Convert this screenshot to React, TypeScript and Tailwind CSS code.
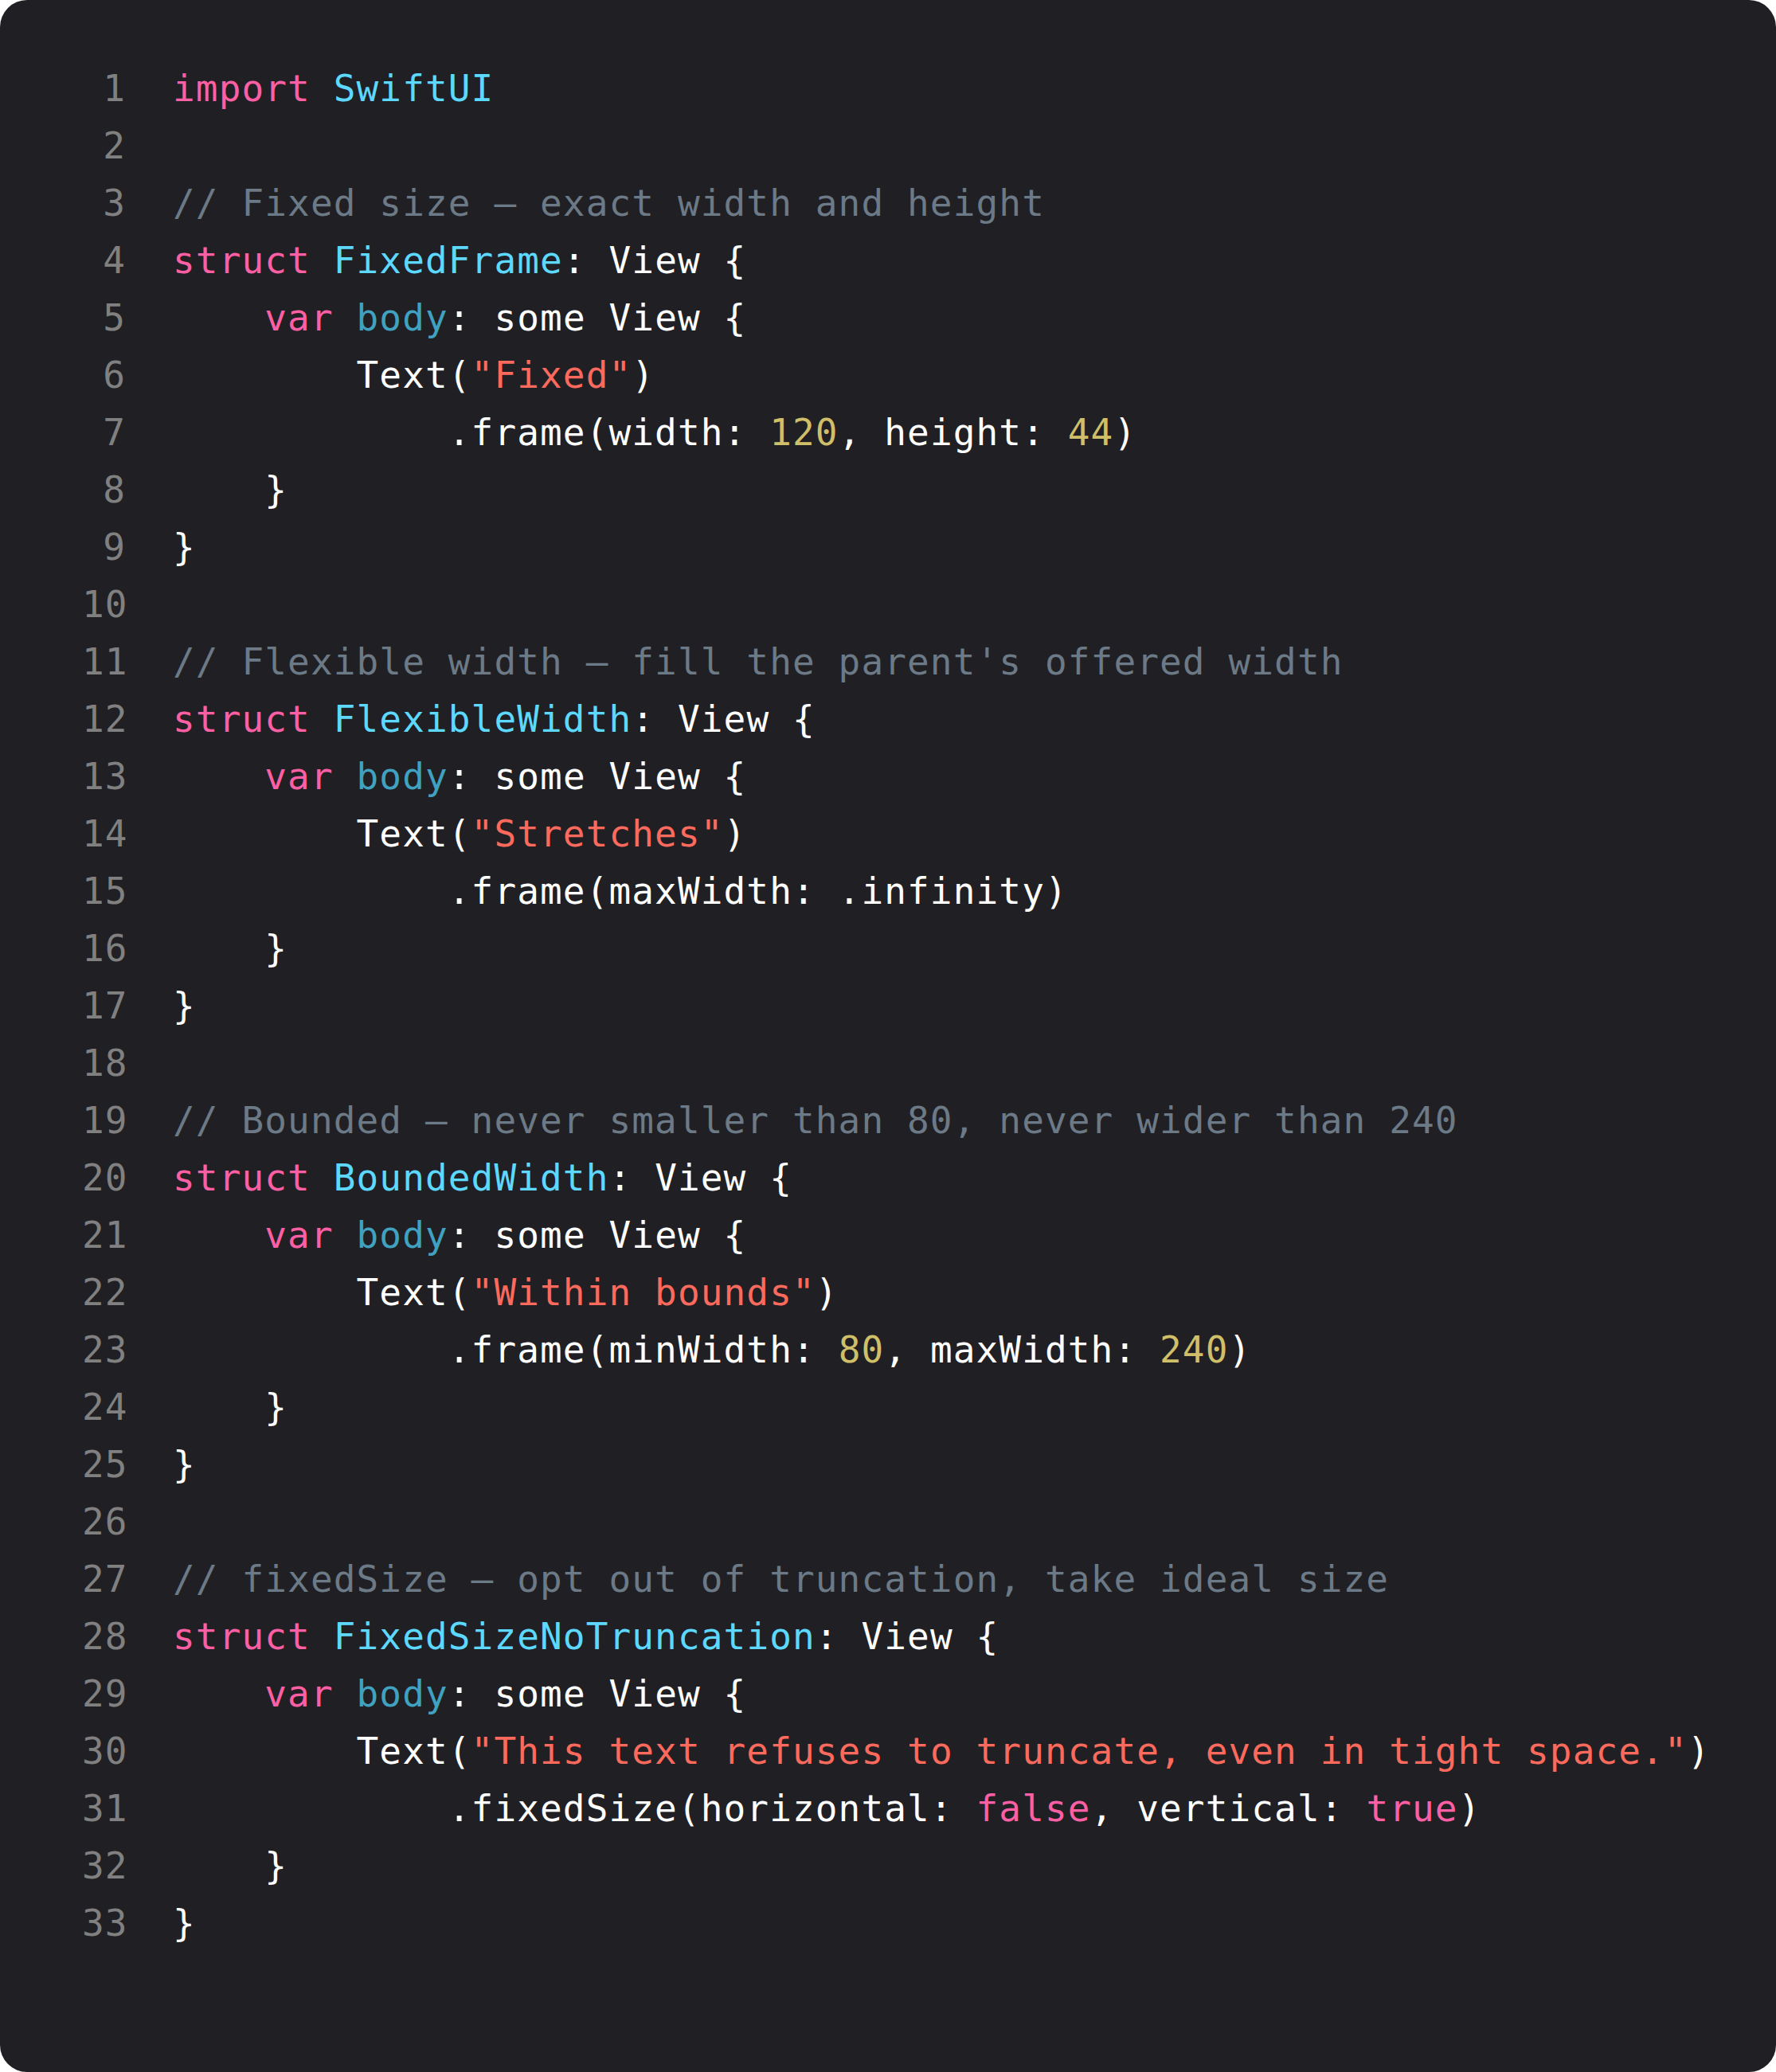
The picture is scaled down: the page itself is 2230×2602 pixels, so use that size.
type Tok = [string, string];

const kw = "text-[#fc5fa3]";
const ty = "text-[#5dd8ff]";
const pr = "text-[#41a1c0]";
const st = "text-[#fc6a5d]";
const nu = "text-[#d0bf69]";
const cm = "text-[#6c7986]";
const pl = "text-white";

const body: Tok[] = [["    ", pl], ["var", kw], [" ", pl], ["body", pr], [": some View {", pl]];

const lines: Tok[][] = [
  [["import", kw], [" ", pl], ["SwiftUI", ty]],
  [],
  [["// Fixed size — exact width and height", cm]],
  [["struct", kw], [" ", pl], ["FixedFrame", ty], [": View {", pl]],
  body,
  [["        Text(", pl], ['"Fixed"', st], [")", pl]],
  [["            .frame(width: ", pl], ["120", nu], [", height: ", pl], ["44", nu], [")", pl]],
  [["    }", pl]],
  [["}", pl]],
  [],
  [["// Flexible width — fill the parent's offered width", cm]],
  [["struct", kw], [" ", pl], ["FlexibleWidth", ty], [": View {", pl]],
  body,
  [["        Text(", pl], ['"Stretches"', st], [")", pl]],
  [["            .frame(maxWidth: .infinity)", pl]],
  [["    }", pl]],
  [["}", pl]],
  [],
  [["// Bounded — never smaller than 80, never wider than 240", cm]],
  [["struct", kw], [" ", pl], ["BoundedWidth", ty], [": View {", pl]],
  body,
  [["        Text(", pl], ['"Within bounds"', st], [")", pl]],
  [["            .frame(minWidth: ", pl], ["80", nu], [", maxWidth: ", pl], ["240", nu], [")", pl]],
  [["    }", pl]],
  [["}", pl]],
  [],
  [["// fixedSize — opt out of truncation, take ideal size", cm]],
  [["struct", kw], [" ", pl], ["FixedSizeNoTruncation", ty], [": View {", pl]],
  body,
  [["        Text(", pl], ['"This text refuses to truncate, even in tight space."', st], [")", pl]],
  [["            .fixedSize(horizontal: ", pl], ["false", kw], [", vertical: ", pl], ["true", kw], [")", pl]],
  [["    }", pl]],
  [["}", pl]],
];

export default function App() {
  return (
    <div className="min-h-screen bg-white">
      <div
        className="h-[2602px] w-[2230px] rounded-[34px] bg-[#202024] pt-[75px] pl-[103px]"
        style={{ fontFamily: '"DejaVu Sans Mono", "Liberation Mono", monospace' }}
      >
        {lines.map((toks, i) => (
          <div key={i} className="flex h-[72px] items-center text-[46px] leading-[72px] tracking-[1.12px]">
            <span className="w-[55px] shrink-0 text-right text-[#808080]">{i + 1}</span>
            <span className="ml-[59px] whitespace-pre">
              {toks.map(([t, c], j) => (
                <span key={j} className={c}>
                  {t}
                </span>
              ))}
            </span>
          </div>
        ))}
      </div>
    </div>
  );
}
